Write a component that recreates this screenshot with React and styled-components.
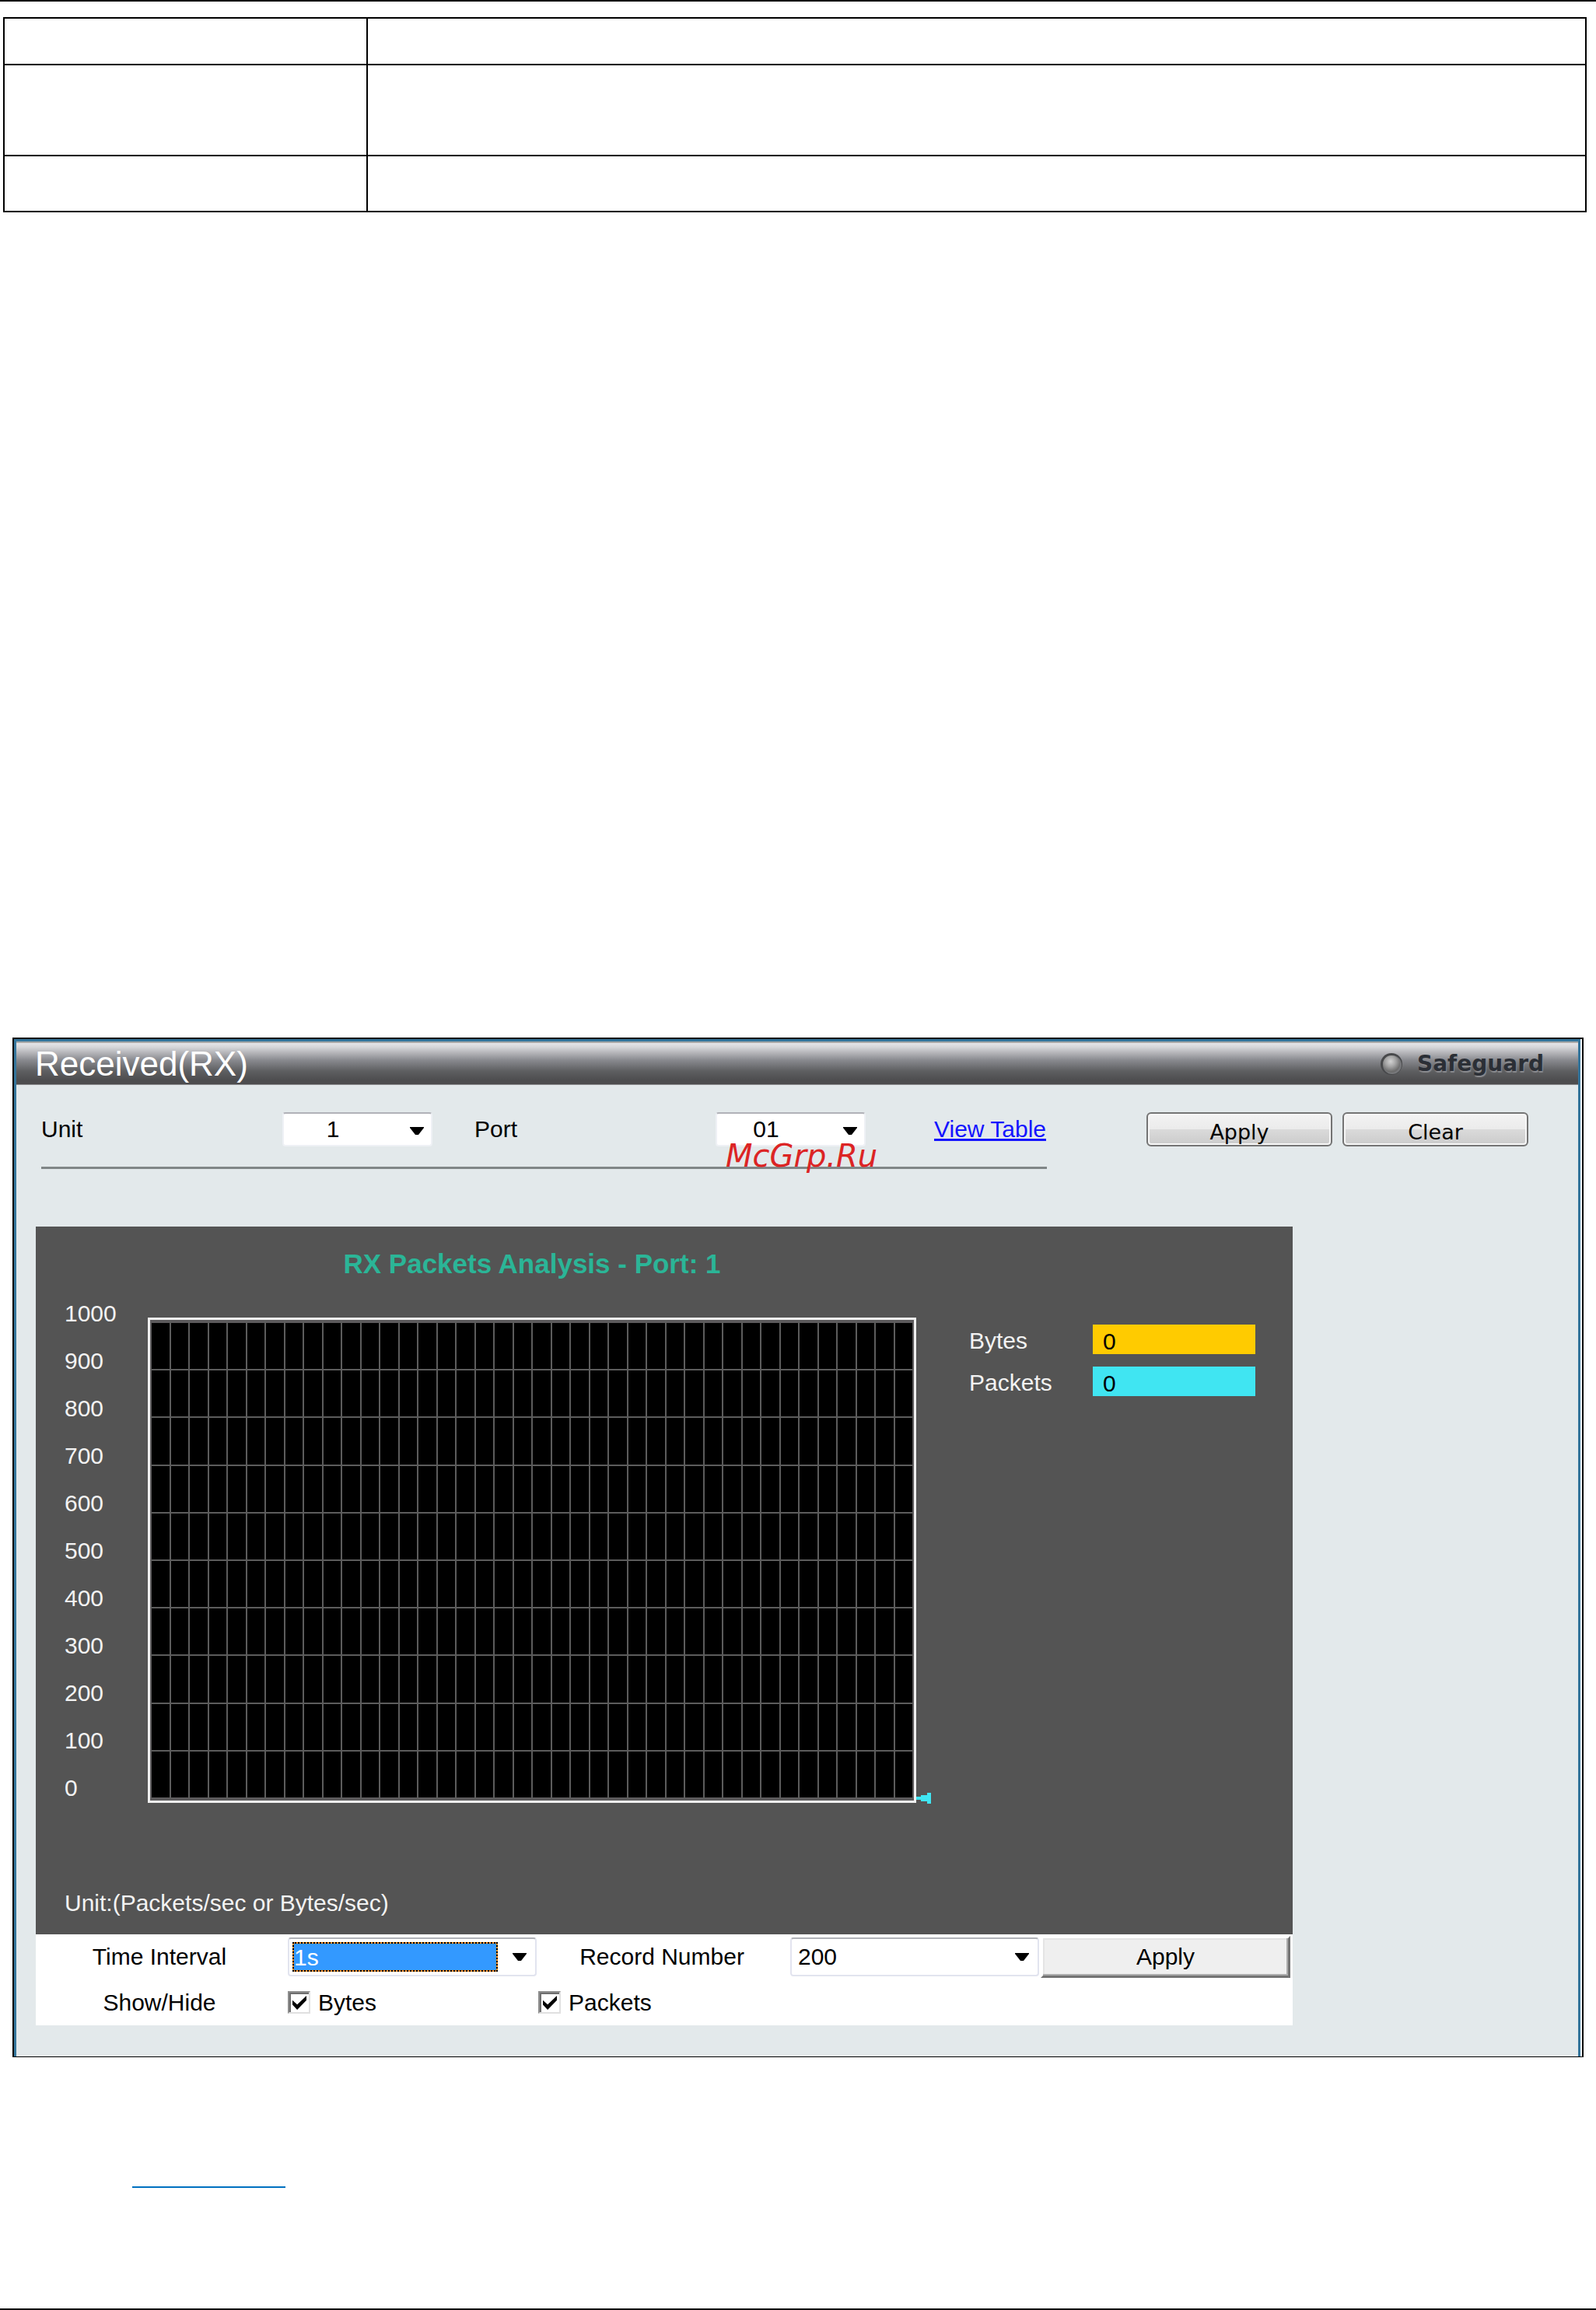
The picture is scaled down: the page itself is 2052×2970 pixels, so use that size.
import React, { Component } from 'react';
import styled, { createGlobalStyle } from 'styled-components';

const GlobalStyle = createGlobalStyle`
    * {
        box-sizing: border-box;
    }
    body {
        margin: 0;
        background-color: #fff;
        color: #000;
        font-family: "Liberation Sans", Arial, sans-serif;
        font-size: 30px;
        line-height: 36px;
    }
    select, input, button {
        font: inherit;
        color: inherit;
        margin: 0;
        border-radius: 0;
    }
`
const Page = styled.div`
    display: flex;
    flex-direction: column;
    min-height: 100vh;
    border-top: 2px solid #000;
    border-bottom: 2px solid #000;
`
const ParameterTable = styled.table`
    margin: 20px 12px 0 4px;
    border-collapse: collapse;
    table-layout: fixed;
    td {
        border: 2px solid #000;
        padding: 0;
    }
    td:first-child {
        width: 467px;
    }
`
const ParameterRow = styled.tr`
    height: ${props => props.$height}px;
`
const Window = styled.section`
    margin: 1061px 16px 0;
    padding-right: 2px;
    border: 2px solid #000;
    border-bottom-width: 1px;
`
const WindowBody = styled.div`
    border: 3px solid #33749b;
    border-bottom: 0;
    background-color: #e3e9eb;
    padding-bottom: 40px;
`
const TitleBar = styled.header`
    display: flex;
    align-items: center;
    justify-content: space-between;
    height: 56px;
    padding: 0 44px 0 24px;
    border-top: 2px solid #a9a9a9;
    border-bottom: 1px solid #8c8d8f;
    background: linear-gradient(#e6e6e9 0%, #d6d6d9 10%, #88898e 42%, #5e5f61 68%, #4d4d4f 90%);
    h1 {
        margin: 0;
        color: #fff;
        font-size: 44px;
        font-weight: normal;
        line-height: 48px;
    }
`
const Safeguard = styled.div`
    display: flex;
    align-items: center;
    gap: 18px;
    color: #2b2f36;
    font-family: "DejaVu Sans", sans-serif;
    font-size: 28px;
    font-weight: bold;
    text-shadow: 1px 2px 1px #8b8c90;
`
const Toolbar = styled.div`
    display: flex;
    align-items: flex-start;
    justify-content: space-between;
    padding: 35px 64px 0 32px;
`
const Filters = styled.div`
    position: relative;
    display: flex;
    align-items: center;
    width: 1293px;
    height: 73px;
    padding-bottom: 26px;
    border-bottom: 3px solid #808687;
    label {
        flex: none;
        width: 310px;
    }
    label + div {
        margin-right: 54px;
    }
`
const TableLink = styled.a`
    margin-left: 34px;
    color: #1414ff;
    white-space: nowrap;
`
const Watermark = styled.span`
    position: absolute;
    left: 880px;
    bottom: -10px;
    color: #dc2424;
    font-family: "DejaVu Sans", sans-serif;
    font-size: 40px;
    font-style: italic;
    line-height: 48px;
`
const Actions = styled.div`
    display: flex;
    gap: 13px;
`
const RoundButton = styled.button`
    width: 239px;
    height: 44px;
    padding: 8px 0 0;
    border: 2px solid #747474;
    border-radius: 6px;
    background: linear-gradient(#f3f3f3 0%, #ebebeb 50%, #dadada 51%, #cbcbcb 100%);
    box-shadow: inset 0 0 0 2px #f6f6f6;
    font-family: "DejaVu Sans", sans-serif;
    font-size: 27px;
    line-height: 32px;
`
const SelectFrame = styled.div`
    display: flex;
    flex: none;
    align-items: center;
    width: ${props => props.$wide ? 320 : 193}px;
    height: ${props => props.$wide ? 50 : 44}px;
    padding: ${props => props.$wide ? '4px 11px 4px 4px' : '4px 9px 0 6px'};
    border: 2px solid ${props => props.$wide ? '#e2e4ef' : '#eef1f5'};
    border-top-color: #b1b2b8;
    border-radius: 4px;
    background-color: #fff;
    select {
        flex: 1;
        min-width: 0;
        height: 38px;
        padding: 0 4px;
        border: 0;
        outline: 0;
        appearance: none;
        background: none;
        ${props => !props.$wide && `
            height: 40px;
            padding: 0 42px 4px 0;
            text-align: center;
            text-align-last: center;
        `}
        ${props => props.$selected && `
            margin-right: 19px;
            padding: 0;
            border: 2px dotted #000;
            background: linear-gradient(#39f, #39f) padding-box, #f58a1f border-box;
            color: #fff;
        `}
    }
`
const Monitor = styled.div`
    width: 1616px;
    margin: 74px 0 0 25px;
    background-color: #fff;
`
const ChartPanel = styled.div`
    padding: 27px 0 22px 37px;
    background-color: #545454;
    color: #f2f2f2;
`
const ChartTitle = styled.h2`
    width: 988px;
    margin: 0 0 12px 107px;
    color: #2bb597;
    font-size: 35px;
    line-height: 42px;
    text-align: center;
`
const ChartRow = styled.div`
    display: flex;
    align-items: flex-start;
`
const Axis = styled.ul`
    width: 107px;
    margin: 0;
    padding: 0;
    list-style: none;
    line-height: 61px;
`
const Plot = styled.svg`
    display: block;
    flex: none;
    margin-top: 36px;
`
const Legend = styled.div`
    display: flex;
    flex-direction: column;
    gap: 16px;
    margin: 45px 0 0 48px;
`
const LegendRow = styled.div`
    display: flex;
    height: 38px;
    line-height: 32px;
    label {
        width: 159px;
        padding-top: 5px;
    }
    input {
        width: 209px;
        padding: 5px 13px 0;
        border: 0;
        outline: 0;
        background-color: ${props => props.$color};
        color: #000;
    }
`
const UnitNote = styled.p`
    margin: 100px 0 0;
`
const Settings = styled.div`
    display: grid;
    grid-template-columns: 324px 322px 324px 322px 1fr;
    grid-template-rows: 58px 59px;
    align-items: center;
`
const SettingLabel = styled.label`
    padding-right: 6px;
    text-align: center;
`
const FlatButton = styled.button`
    height: 54px;
    margin-right: 3px;
    padding: 0;
    border: 3px solid #737373;
    border-top-color: #fff;
    border-left-color: #fff;
    background-color: #efefef;
    box-shadow: inset -2px -2px 0 #acacac, inset 2px 2px 0 #e4e4e4;
`
const CheckField = styled.div`
    display: flex;
    align-items: center;
    gap: 10px;
    input {
        width: 29px;
        height: 29px;
        padding: 4px;
        appearance: none;
        border: 2px solid #e0e0e0;
        border-top-color: #8e8e8e;
        border-left-color: #8e8e8e;
        background-color: #fff;
        box-shadow: inset 2px 2px 0 #6e6e6e;
    }
    input:checked::after {
        content: "";
        display: block;
        width: 18px;
        height: 18px;
        background-color: #000;
        clip-path: polygon(0 32%, 34% 62%, 100% 0, 100% 32%, 34% 100%, 0 64%);
    }
`
const LinkRule = styled.hr`
    width: 197px;
    height: 2px;
    margin: 166px 0 0 170px;
    border: 0;
    background-color: #0070c0;
`

const Arrow = () => (
    <svg width="18" height="10" viewBox="0 0 18 10" aria-hidden="true">
        <path d="M0 0h18v1l-7 9H7L0 1z" fill="#000" />
    </svg>
)

const Lamp = () => (
    <svg width="30" height="30" viewBox="0 0 30 30" aria-hidden="true">
        <defs>
            <radialGradient id="lamp" cx="45%" cy="35%" r="60%">
                <stop offset="0" stopColor="#d2d2d2" />
                <stop offset="0.5" stopColor="#a5a5a5" />
                <stop offset="1" stopColor="#6c6c6c" />
            </radialGradient>
        </defs>
        <circle cx="15" cy="15" r="14" fill="#48494b" />
        <circle cx="16" cy="16" r="12" fill="#77787b" />
        <circle cx="15" cy="15" r="11" fill="url(#lamp)" />
    </svg>
)

const COLUMNS = 40;
const ROWS = 10;

class Grid extends Component {
    _lines = () => {
        const lines = [];
        for (let i = 1; i < COLUMNS; i++) {
            const x = Math.round(4 + i * 980 / COLUMNS);
            lines.push(<path key={'x' + i} d={`M${x} 3V621`} />)
        }
        for (let i = 1; i < ROWS; i++) {
            const y = Math.round(6 + i * 612 / ROWS);
            lines.push(<path key={'y' + i} d={`M3 ${y}H985`} />)
        }
        return lines;
    }
    render() {
        return (
            <Plot width="1008" height="626" viewBox="0 0 1008 626">
                <rect width="988" height="624" fill="#f0f0f0" />
                <rect x="3" y="3" width="982" height="618" fill="#5c5a5c" />
                <rect x="5" y="7" width="978" height="610" fill="#000" />
                <g stroke="#5c5c5c" strokeWidth="2">{this._lines()}</g>
                <path d="M988 616h6v-2h8v-3h5v14h-5v-3h-8v-2h-6z" fill="#40e5f2" />
            </Plot>
        )
    }
}

class App extends Component {
    constructor() {
        super()
        this.state = {
            bytes: true,
            packets: true,
        }
    }
    _toggle = (name) => {
        this.setState({ [name]: !this.state[name] })
    }
    render() {
        const scale = [1000, 900, 800, 700, 600, 500, 400, 300, 200, 100, 0];
        return (
            <Page>
                <GlobalStyle />
                <ParameterTable>
                    <tbody>
                        <ParameterRow $height={60}><td /><td /></ParameterRow>
                        <ParameterRow $height={117}><td /><td /></ParameterRow>
                        <ParameterRow $height={72}><td /><td /></ParameterRow>
                    </tbody>
                </ParameterTable>
                <Window>
                    <WindowBody>
                        <TitleBar>
                            <h1>Received(RX)</h1>
                            <Safeguard><Lamp />Safeguard</Safeguard>
                        </TitleBar>
                        <Toolbar>
                            <Filters>
                                <label htmlFor="unit">Unit</label>
                                <SelectFrame>
                                    <select id="unit"><option>1</option></select>
                                    <Arrow />
                                </SelectFrame>
                                <label htmlFor="port">Port</label>
                                <SelectFrame>
                                    <select id="port"><option>01</option></select>
                                    <Arrow />
                                </SelectFrame>
                                <TableLink href="#table">View Table</TableLink>
                                <Watermark>McGrp.Ru</Watermark>
                            </Filters>
                            <Actions>
                                <RoundButton type="button">Apply</RoundButton>
                                <RoundButton type="button">Clear</RoundButton>
                            </Actions>
                        </Toolbar>
                        <Monitor>
                            <ChartPanel>
                                <ChartTitle>RX Packets Analysis - Port: 1</ChartTitle>
                                <ChartRow>
                                    <Axis>
                                        {scale.map(value => <li key={value}>{value}</li>)}
                                    </Axis>
                                    <Grid />
                                    <Legend>
                                        <LegendRow $color="#ffcb00">
                                            <label htmlFor="bytesValue">Bytes</label>
                                            <input id="bytesValue" value="0" readOnly />
                                        </LegendRow>
                                        <LegendRow $color="#40e5f2">
                                            <label htmlFor="packetsValue">Packets</label>
                                            <input id="packetsValue" value="0" readOnly />
                                        </LegendRow>
                                    </Legend>
                                </ChartRow>
                                <UnitNote>Unit:(Packets/sec or Bytes/sec)</UnitNote>
                            </ChartPanel>
                            <Settings>
                                <SettingLabel htmlFor="interval">Time Interval</SettingLabel>
                                <SelectFrame $wide $selected>
                                    <select id="interval"><option>1s</option></select>
                                    <Arrow />
                                </SelectFrame>
                                <SettingLabel htmlFor="records">Record Number</SettingLabel>
                                <SelectFrame $wide>
                                    <select id="records"><option>200</option></select>
                                    <Arrow />
                                </SelectFrame>
                                <FlatButton type="button">Apply</FlatButton>
                                <SettingLabel as="span">Show/Hide</SettingLabel>
                                <CheckField>
                                    <input
                                        id="showBytes"
                                        type="checkbox"
                                        checked={this.state.bytes}
                                        onChange={() => this._toggle('bytes')}
                                    />
                                    <label htmlFor="showBytes">Bytes</label>
                                </CheckField>
                                <CheckField>
                                    <input
                                        id="showPackets"
                                        type="checkbox"
                                        checked={this.state.packets}
                                        onChange={() => this._toggle('packets')}
                                    />
                                    <label htmlFor="showPackets">Packets</label>
                                </CheckField>
                            </Settings>
                        </Monitor>
                    </WindowBody>
                </Window>
                <LinkRule />
            </Page>
        );
    }
}

export default App;
